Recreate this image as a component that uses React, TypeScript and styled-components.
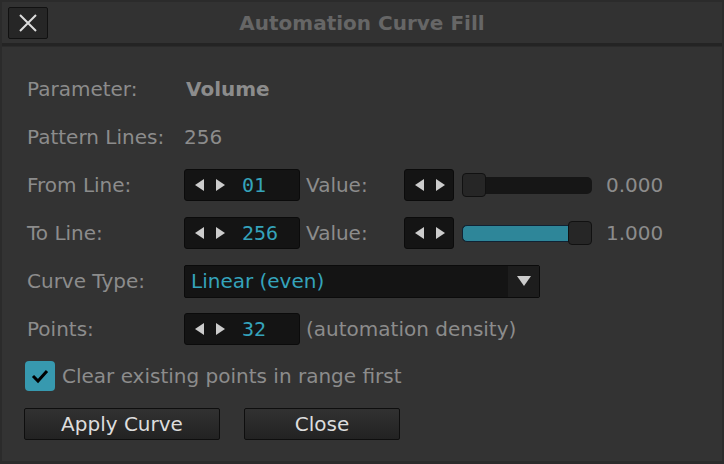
import styled, {createGlobalStyle} from 'styled-components';

const Global = createGlobalStyle`
   html, body {
      margin: 0;
      padding: 0;
      background: #2a2a2a;
   }
   * {
      box-sizing: border-box;
   }
`;

const teal = '#35a3bb';
const label = '#8c8c8c';

const Window = styled.div`
   width: 724px;
   height: 464px;
   background: #2b2b2b;
   padding: 2px 2px 3px 2px;
   display: flex;
   flex-direction: column;
   font-family: 'DejaVu Sans', sans-serif;
`;

const TitleBar = styled.div`
   height: 44px;
   background: #323232;
   display: grid;
   grid-template-columns: 46px 1fr 46px;
   align-items: center;
   padding: 0 6px;
   border-bottom: 3px solid #242424;
   flex: 0 0 auto;
`;

const CloseX = styled.button`
   width: 40px;
   height: 32px;
   background: #262626;
   border: 1px solid #111;
   border-radius: 2px;
   display: flex;
   align-items: center;
   justify-content: center;
   padding: 0;
`;

const Title = styled.div`
   text-align: center;
   color: #666;
   font-weight: bold;
   font-size: 20px;
`;

const Body = styled.div`
   flex: 1 1 auto;
   background: #333;
   margin-top: 1px;
   padding: 18px 0 0 22px;
   display: flex;
   flex-direction: column;
`;

const Row = styled.div`
   height: 48px;
   display: flex;
   align-items: center;
`;

const Label = styled.span`
   width: 160px;
   color: ${label};
   font-size: 20px;
   padding-left: 3px;
   flex: 0 0 auto;
`;

const Text = styled.span<{$bold?: boolean}>`
   color: ${label};
   font-size: 20px;
   font-weight: ${p => (p.$bold ? 'bold' : 'normal')};
   padding-left: ${p => (p.$bold ? 2 : 0)}px;
`;

const Spin = styled.div<{$w: number}>`
   width: ${p => p.$w}px;
   height: 32px;
   background: #141414;
   border: 1px solid #0b0b0b;
   border-radius: 3px;
   display: flex;
   align-items: center;
   padding-left: 10px;
   gap: 17px;
   flex: 0 0 auto;
`;

const Arrows = styled.div`
   display: flex;
   gap: 12px;
   align-items: center;
`;

const Num = styled.span`
   font-family: 'DejaVu Sans Mono', monospace;
   color: ${teal};
   font-size: 20px;
`;

const SideLabel = styled.span<{$w?: number}>`
   color: ${label};
   font-size: 20px;
   margin-left: 6px;
   width: ${p => (p.$w ? `${p.$w}px` : 'auto')};
`;

const Track = styled.div`
   margin-left: 8px;
   width: 130px;
   height: 17px;
   background: #161616;
   border-radius: 5px;
   position: relative;
`;

const Fill = styled.div`
   height: 100%;
   background: #2e8699;
   border: 1px solid #123;
   border-radius: 5px;
`;

const Handle = styled.div`
   position: absolute;
   top: -4px;
   width: 24px;
   height: 24px;
   background: #262626;
   border: 1px solid #111;
   border-radius: 4px;
`;

const SliderValue = styled.span`
   color: ${label};
   font-size: 20px;
   margin-left: 14px;
`;

const Select = styled.div`
   width: 356px;
   height: 33px;
   background: #141414;
   border: 1px solid #0b0b0b;
   border-radius: 2px;
   display: flex;
   align-items: stretch;
   flex: 0 0 auto;
`;

const SelectText = styled.span`
   flex: 1 1 auto;
   color: ${teal};
   font-size: 20px;
   padding-left: 6px;
   display: flex;
   align-items: center;
`;

const SelectArrow = styled.div`
   width: 31px;
   background: #1d1d1d;
   display: flex;
   align-items: center;
   justify-content: center;
`;

const CheckRow = styled.div`
   height: 46px;
   display: flex;
   align-items: center;
   gap: 7px;
   padding-left: 1px;
`;

const Check = styled.div`
   width: 30px;
   height: 30px;
   background: #3799af;
   border-radius: 4px;
   display: flex;
   align-items: center;
   justify-content: center;
`;

const Buttons = styled.div`
   display: flex;
   gap: 24px;
   margin-top: 9px;
`;

const Button = styled.button<{$w: number}>`
   width: ${p => p.$w}px;
   height: 32px;
   background: linear-gradient(#313131, #222);
   border: 1px solid #0e0e0e;
   border-radius: 2px;
   color: #ddd;
   font-family: 'DejaVu Sans', sans-serif;
   font-size: 20px;
   padding: 0;
`;

const Tri = ({dir}: {dir: 'l' | 'r'}) => (
   <svg width='9' height='12' viewBox='0 0 9 12'>
      <path d={dir === 'l' ? 'M9 0 L0 6 L9 12 Z' : 'M0 0 L9 6 L0 12 Z'} fill='#ccc' />
   </svg>
);

const ArrowPair = () => (
   <Arrows>
      <Tri dir='l' />
      <Tri dir='r' />
   </Arrows>
);

const Slider = ({value}: {value: number}) => {
   const pos = value * 106;
   return (
      <Track>
         {value > 0 && <Fill style={{width: pos + 20}} />}
         <Handle style={{left: pos}} />
      </Track>
   );
};

const App = () => (
   <Window>
      <Global />
      <TitleBar>
         <CloseX type='button'>
            <svg width='18' height='18' viewBox='0 0 18 18'>
               <path d='M1 1 L17 17 M17 1 L1 17' stroke='#ddd' strokeWidth='2' />
            </svg>
         </CloseX>
         <Title>Automation Curve Fill</Title>
         <span />
      </TitleBar>
      <Body>
         <Row>
            <Label>Parameter:</Label>
            <Text $bold>Volume</Text>
         </Row>
         <Row>
            <Label>Pattern Lines:</Label>
            <Text>256</Text>
         </Row>
         <Row>
            <Label>From Line:</Label>
            <Spin $w={116}>
               <ArrowPair />
               <Num>01</Num>
            </Spin>
            <SideLabel $w={98}>Value:</SideLabel>
            <Spin $w={50}>
               <ArrowPair />
            </Spin>
            <Slider value={0} />
            <SliderValue>0.000</SliderValue>
         </Row>
         <Row>
            <Label>To Line:</Label>
            <Spin $w={116}>
               <ArrowPair />
               <Num>256</Num>
            </Spin>
            <SideLabel $w={98}>Value:</SideLabel>
            <Spin $w={50}>
               <ArrowPair />
            </Spin>
            <Slider value={1} />
            <SliderValue>1.000</SliderValue>
         </Row>
         <Row>
            <Label>Curve Type:</Label>
            <Select>
               <SelectText>Linear (even)</SelectText>
               <SelectArrow>
                  <svg width='14' height='10' viewBox='0 0 14 10'>
                     <path d='M0 0 L14 0 L7 10 Z' fill='#ccc' />
                  </svg>
               </SelectArrow>
            </Select>
         </Row>
         <Row>
            <Label>Points:</Label>
            <Spin $w={116}>
               <ArrowPair />
               <Num>32</Num>
            </Spin>
            <SideLabel>(automation density)</SideLabel>
         </Row>
         <CheckRow>
            <Check>
               <svg width='18' height='16' viewBox='0 0 18 16'>
                  <path d='M2 8 L7 13 L16 3' stroke='#000' strokeWidth='3' fill='none' />
               </svg>
            </Check>
            <Text>Clear existing points in range first</Text>
         </CheckRow>
         <Buttons>
            <Button type='button' $w={196}>Apply Curve</Button>
            <Button type='button' $w={156}>Close</Button>
         </Buttons>
      </Body>
   </Window>
);

export default App;
